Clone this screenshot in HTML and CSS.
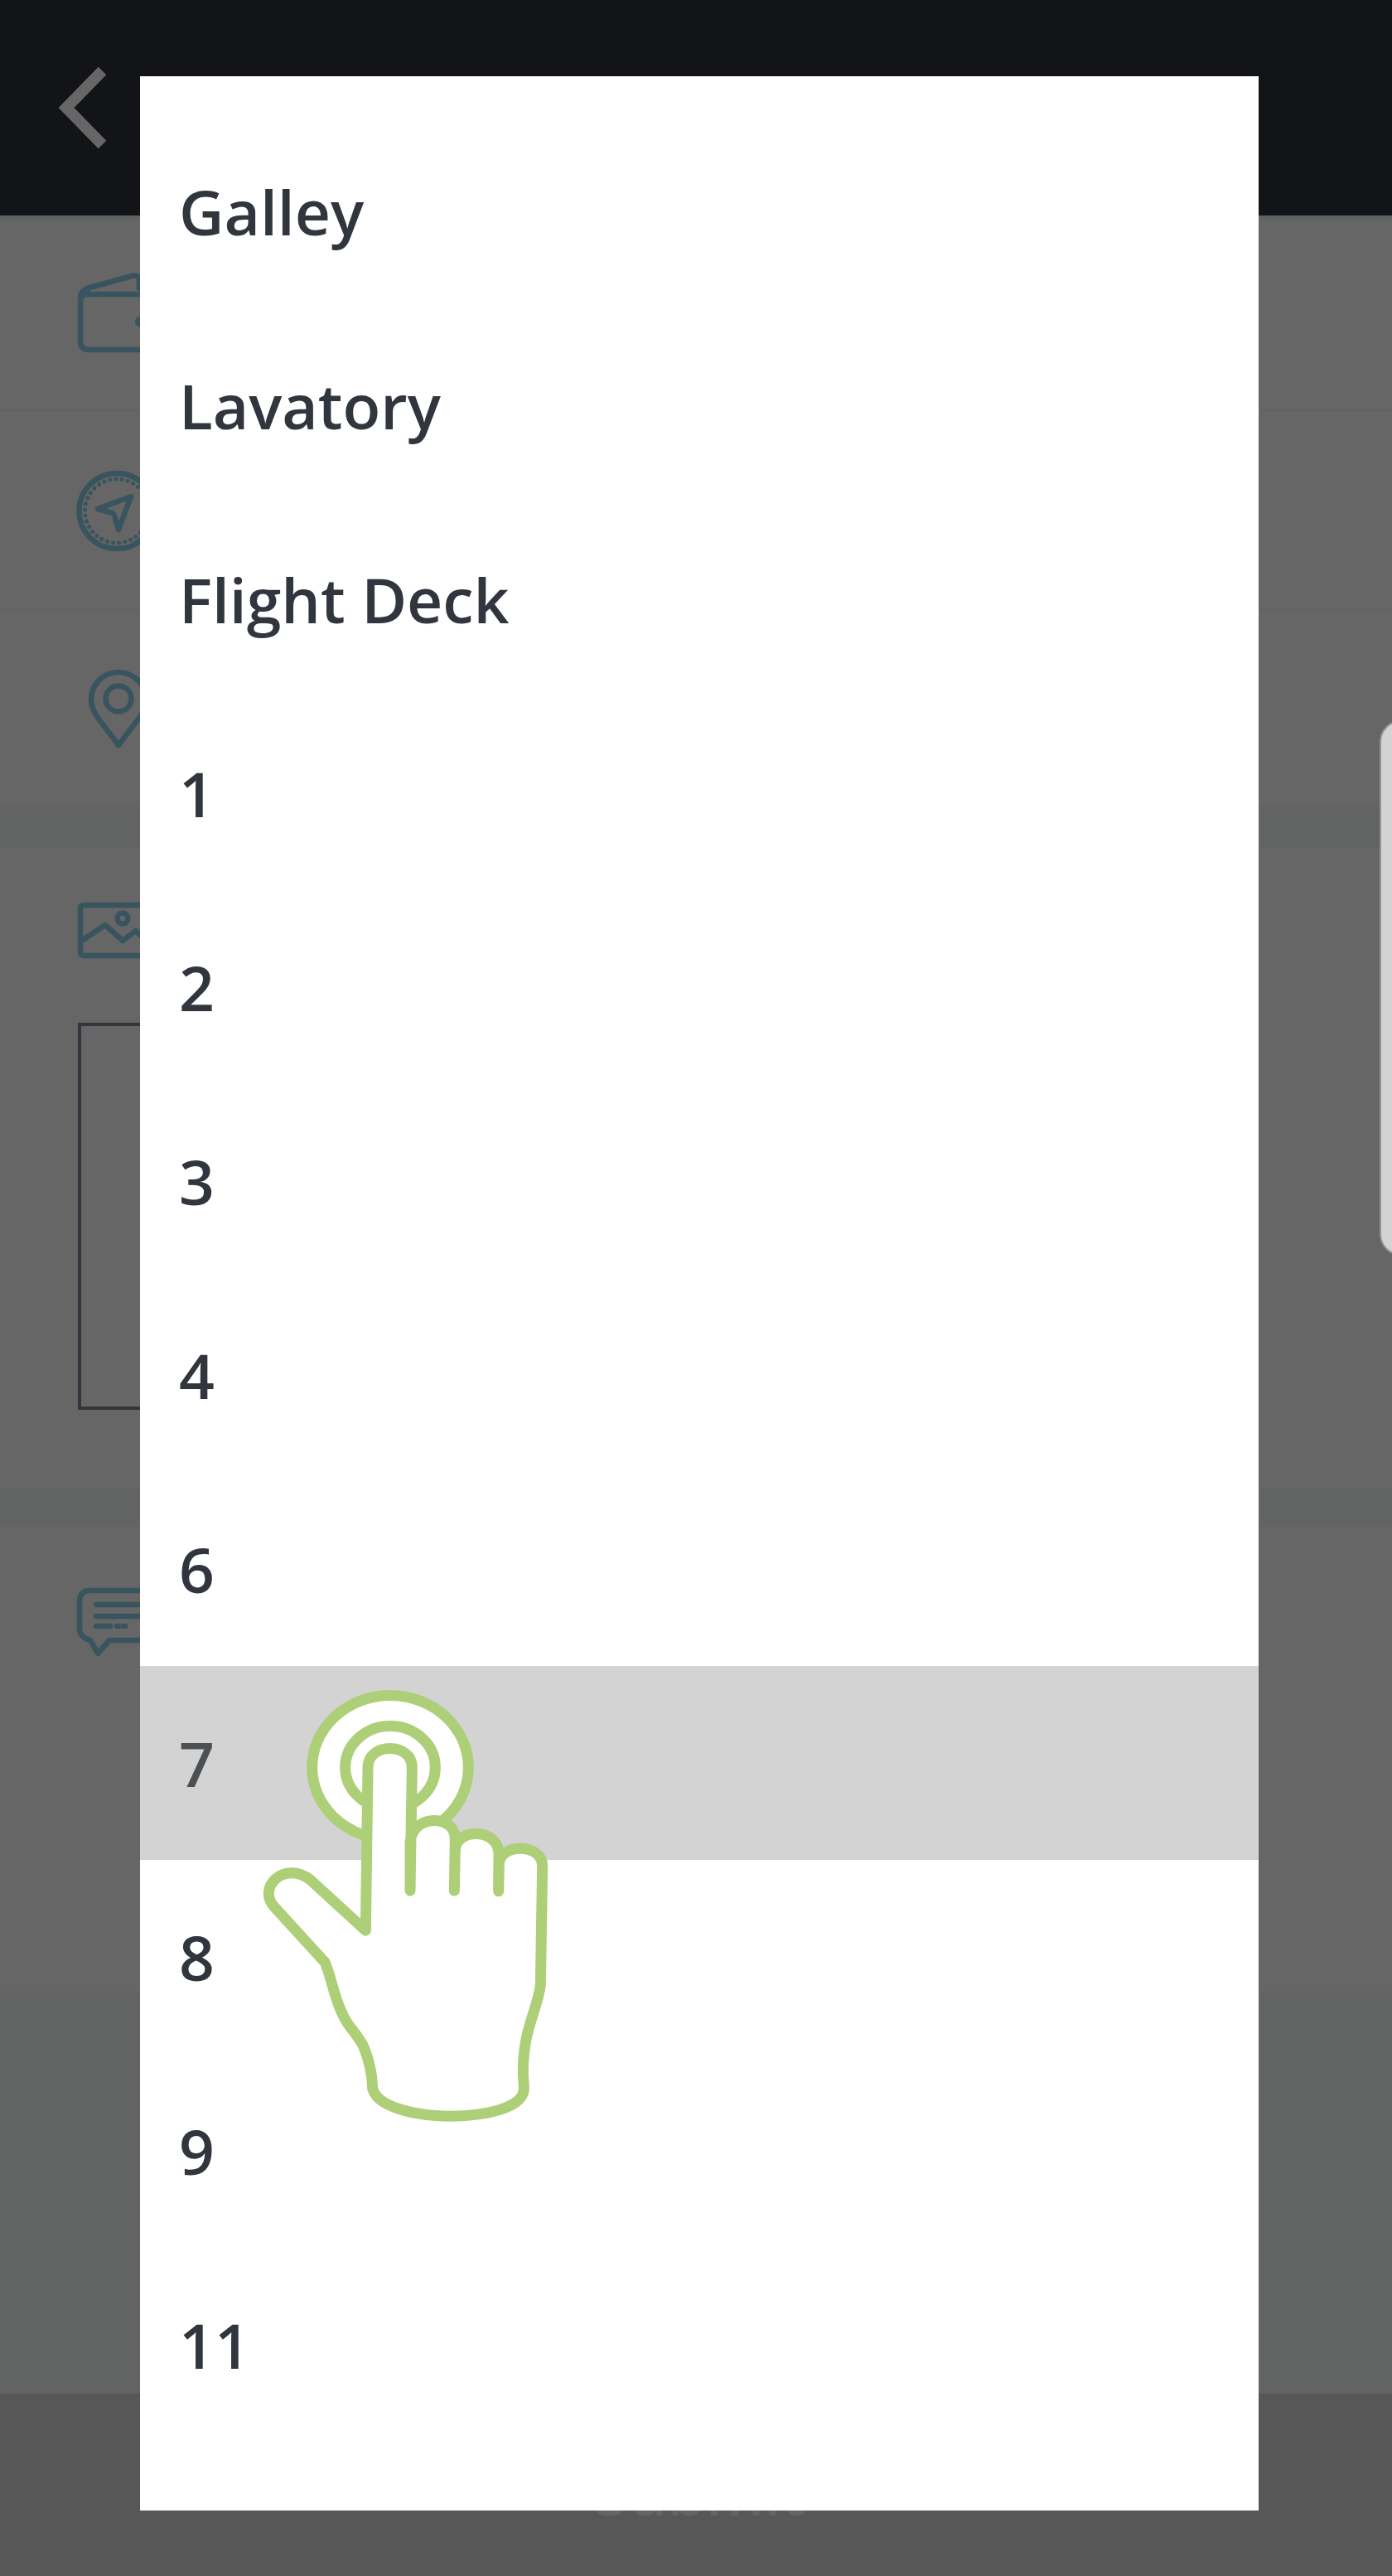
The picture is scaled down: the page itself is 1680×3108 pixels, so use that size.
FILE: index.html
```html
<!DOCTYPE html>
<html lang="en">
<head>
<meta charset="utf-8">
<title>Select location</title>
<link rel="stylesheet" href="styles.css">
</head>
<body>
<div class="screen">
  <header class="topbar">
    <svg class="back" viewBox="0 0 60 100"><path d="M53.500 5.500L10 50L53.500 94.500"/></svg>
  </header>
  <main class="form">
    <section class="field">
      <svg class="icon" viewBox="0 0 110 110"><path d="M110 30H20Q13 30 13 40V87Q13 97 24 97H110M13 34Q13 27 21 23L75 8Q83 6 84 13V23M22 25L14 34"/><ellipse class="dot" cx="86" cy="63" rx="7" ry="6.500"/></svg>
    </section>
    <section class="field">
      <svg class="icon" viewBox="0 0 110 110"><circle cx="57" cy="54.500" r="45.500"/><circle class="dots" cx="57" cy="54.500" r="38.500"/><path d="M74 37L34 52L52 57Q54 59 55 63L59 77Z"/></svg>
    </section>
    <section class="field field-last">
      <svg class="icon" viewBox="0 0 110 110"><path d="M59 97L34 64Q26 52 26 42A33 33 0 0 1 92 42Q92 52 84 64Z"/><circle cx="59" cy="41" r="15.500"/></svg>
    </section>
    <section class="photos">
      <svg class="icon" viewBox="0 0 110 110"><path d="M110 27H17Q13 27 13 31V84Q13 88 17 88H110M13 71L43 51L64 70L80 58L93 70"/><circle cx="64" cy="43" r="6.500"/></svg>
      <div class="photo-box"></div>
    </section>
    <section class="comment">
      <svg class="icon" viewBox="0 0 110 110"><path d="M110 27H23Q12 28 12 40V74Q13 84 25 87L34 103L48 87H110M32 44H110M32 58H110M32 70H49M57 70H59M65 70H67"/></svg>
    </section>
  </main>
  <footer class="submit">Submit</footer>
</div>

<ul class="dialog">
  <li>Galley</li>
  <li>Lavatory</li>
  <li>Flight Deck</li>
  <li>1</li>
  <li>2</li>
  <li>3</li>
  <li>4</li>
  <li>6</li>
  <li class="pressed">7</li>
  <li>8</li>
  <li>9</li>
  <li>11</li>
</ul>

<div class="edge-handle"></div>

<svg class="tap" viewBox="0 0 1260 1568" preserveAspectRatio="none">
  <ellipse cx="573" cy="358" rx="283" ry="235"/>
  <ellipse cx="573" cy="358" rx="163" ry="135"/>
  <path d="M484 890L492 358C493 275 651 275 652 358L645 760V600C655 510 806 510 808 590L805 760L808 625C815 555 964 555 966 640L965 762L967 670C975 605 1123 605 1124 680L1117 1068C1106 1150 1054 1210 1054 1350C1054 1385 1058 1387 1057 1408C1050 1525 540 1525 509 1405C508 1368 500 1320 476 1268C455 1229 424 1207 405 1172C367 1107 362 1045 336 993L155 815C87 750 190 660 284 725Z"/>
</svg>
</body>
</html>
```
FILE: styles.css
```css
* { box-sizing: border-box; }

html { overflow: hidden; }

body {
  position: relative;
  width: 1680px;
  height: 3108px;
  margin: 0;
  overflow: hidden;
  font-family: "Open Sans", sans-serif;
  font-weight: 600;
  color: #31353e;
}

.screen {
  display: flex;
  flex-direction: column;
  height: 3108px;
  background: #616463;
}

.topbar {
  height: 260px;
  padding: 80px 0 0 70px;
  background: #131418;
}

.back {
  display: block;
  width: 60px;
  height: 100px;
  fill: none;
  stroke: #666;
  stroke-width: 13.5;
}

.form { flex: 1; }

.field {
  height: 240px;
  padding: 65px 84px;
  background: #666;
  border-bottom: 3px solid #616463;
}

.field:first-child {
  height: 237px;
  background: linear-gradient(#5f6161, #666 10px);
}

.field-last { height: 235px; border: 0; }

.icon {
  display: block;
  width: 110px;
  height: 110px;
  fill: none;
  stroke: #38545e;
  stroke-width: 6.5;
  stroke-linecap: round;
  stroke-linejoin: round;
}

.icon .dot { fill: #38545e; stroke: none; }
.icon .dots { stroke-width: 5; stroke-dasharray: 0.1 7.1; }

.photos {
  height: 772px;
  margin-top: 51px;
  padding: 42px 84px 0;
  background: #666;
}

.photo-box {
  width: 467px;
  height: 467px;
  margin: 59px 0 0 10px;
  border: 4px solid #31353e;
}

.comment {
  height: 560px;
  margin-top: 47px;
  padding: 50px 84px;
  background: #666;
}

.submit {
  height: 220px;
  padding-left: 10px;
  background: #575757;
  color: #636565;
  font-size: 74px;
  line-height: 238px;
  text-align: center;
}

.dialog {
  position: absolute;
  top: 92px;
  left: 169px;
  width: 1350px;
  height: 2937px;
  margin: 0;
  padding: 46px 0 0;
  list-style: none;
  background: #fff;
}

.dialog li {
  height: 234px;
  padding: 2px 0 0 47px;
  font-size: 75px;
  line-height: 231px;
}

.dialog .pressed {
  background: #d3d3d3;
  color: #4c5054;
}

.edge-handle {
  position: absolute;
  top: 869px;
  right: -15px;
  width: 30px;
  height: 646px;
  background: #d3d3d3;
  border: 2px solid #929292;
  border-radius: 26px 0 0 26px;
}

.tap {
  position: absolute;
  top: 2000px;
  left: 280px;
  width: 420px;
  height: 580px;
  fill: #fff;
  stroke: #adcf78;
  stroke-width: 13px;
  stroke-linecap: round;
  stroke-linejoin: round;
}

.tap * { vector-effect: non-scaling-stroke; }
```
